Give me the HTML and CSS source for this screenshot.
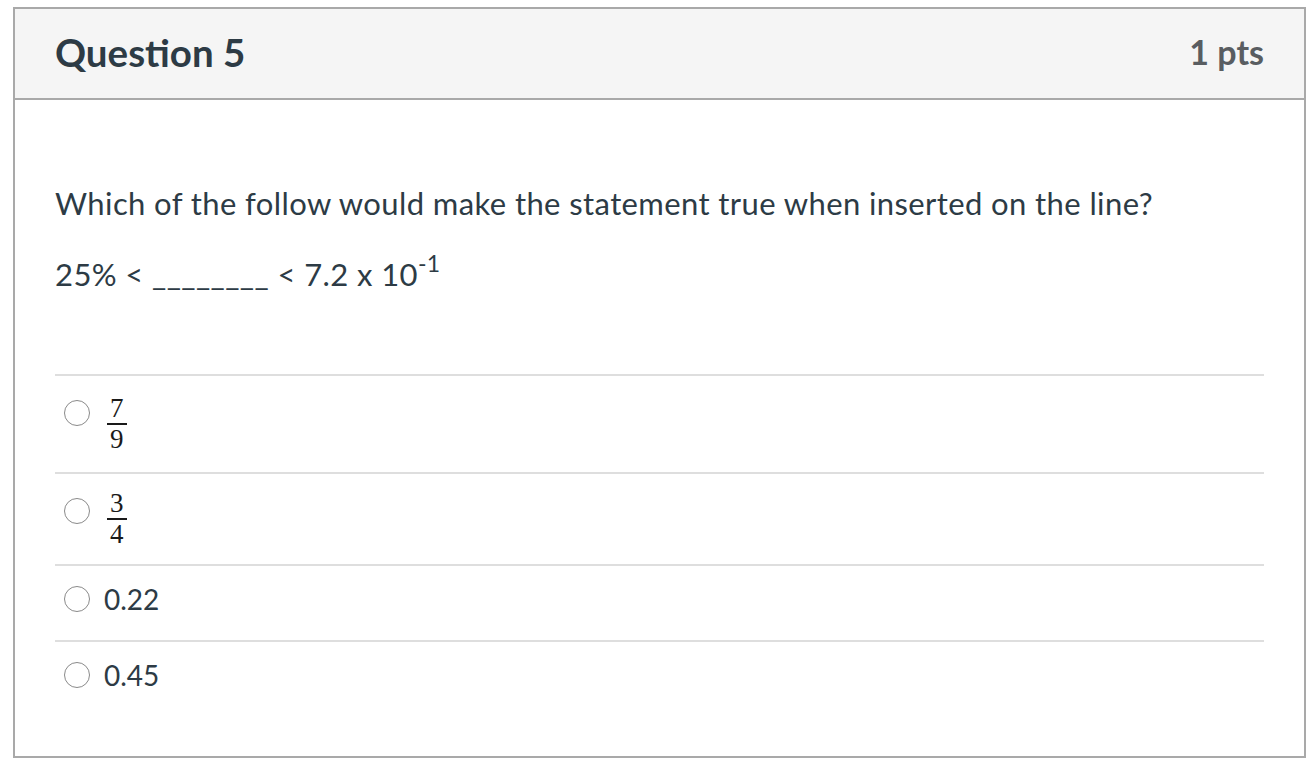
FILE: index.html
```html
<!DOCTYPE html>
<html>
<head>
<meta charset="utf-8">
<link rel="stylesheet" href="styles.css">
</head>
<body>
<div class="page">
  <div class="question">
    <div class="q-header">
      <h2 class="q-title">Question 5</h2>
      <div class="q-points">1 pts</div>
    </div>
    <div class="q-body">
      <p class="q-text">Which of the follow would make the statement true when inserted on the line?</p>
      <p class="q-text q-expr">25% &lt; <span class="blank">________</span> &lt; 7.2 x 10<sup>-1</sup></p>
      <div class="answers">
        <div class="answer answer-frac">
          <span class="radio"></span>
          <span class="frac"><span class="num">7</span><span class="den">9</span></span>
        </div>
        <div class="answer answer-frac2">
          <span class="radio"></span>
          <span class="frac"><span class="num">3</span><span class="den">4</span></span>
        </div>
        <div class="answer answer-text">
          <span class="radio"></span>
          <span class="label">0.22</span>
        </div>
        <div class="answer answer-text answer-last">
          <span class="radio"></span>
          <span class="label">0.45</span>
        </div>
      </div>
    </div>
  </div>
</div>
</body>
</html>
```
FILE: styles.css
```css
html, body {
  margin: 0;
  padding: 0;
  background: #ffffff;
}
body {
  font-family: Lato, "Liberation Sans", sans-serif;
  color: #2d3b45;
}
.page {
  padding: 7px 0 0 13px;
}
.question {
  width: 1293px;
  box-sizing: border-box;
  border: 2px solid #a9a9a9;
  background: #fff;
}
.q-header {
  display: flex;
  align-items: center;
  justify-content: space-between;
  height: 91px;
  box-sizing: border-box;
  padding: 0 40px 4px 40px;
  background: #f5f5f5;
  border-bottom: 2px solid #a9a9a9;
}
.q-title {
  margin: 0;
  font-size: 38.5px;
  font-weight: 700;
  color: #2d3b45;
}
.q-points {
  font-size: 34px;
  font-weight: 700;
  color: #595d61;
}
.q-body {
  padding: 81px 40px 38px 40px;
}
.q-text {
  margin: 0;
  font-size: 31px;
  letter-spacing: 0.4px;
  line-height: 44px;
}
.q-expr {
  margin-top: 27px;
}
.q-expr sup {
  font-size: 23px;
  line-height: 0;
  vertical-align: 14px;
}
.answers {
  margin-top: 78px;
}
.answer {
  display: flex;
  align-items: center;
  border-top: 2px solid #dedede;
  padding-left: 9px;
}
.answer-frac {
  height: 96px;
}
.answer-frac .radio {
  margin-bottom: 22px;
}
.answer-frac2 {
  height: 90px;
}
.answer-frac2 .radio {
  margin-bottom: 16px;
}
.answer-text {
  height: 76px;
  box-sizing: border-box;
  padding-bottom: 8px;
}
.answer-text.answer-last {
  height: 78px;
  padding-bottom: 10px;
}
.radio {
  width: 24px;
  height: 24px;
  border: 1px solid #8a8a8a;
  border-radius: 50%;
  background: #fff;
  flex: none;
}
.frac {
  display: inline-flex;
  flex-direction: column;
  align-items: center;
  margin-left: 17px;
  font-family: "Liberation Serif", "DejaVu Serif", serif;
  font-size: 27px;
  line-height: 27px;
  color: #1a1a1a;
}
.num {
  border-bottom: 2px solid #1a1a1a;
  padding: 0 3px 1px;
}
.den {
  padding-top: 1px;
}
.label {
  margin-left: 14px;
  font-size: 28px;
}
```
